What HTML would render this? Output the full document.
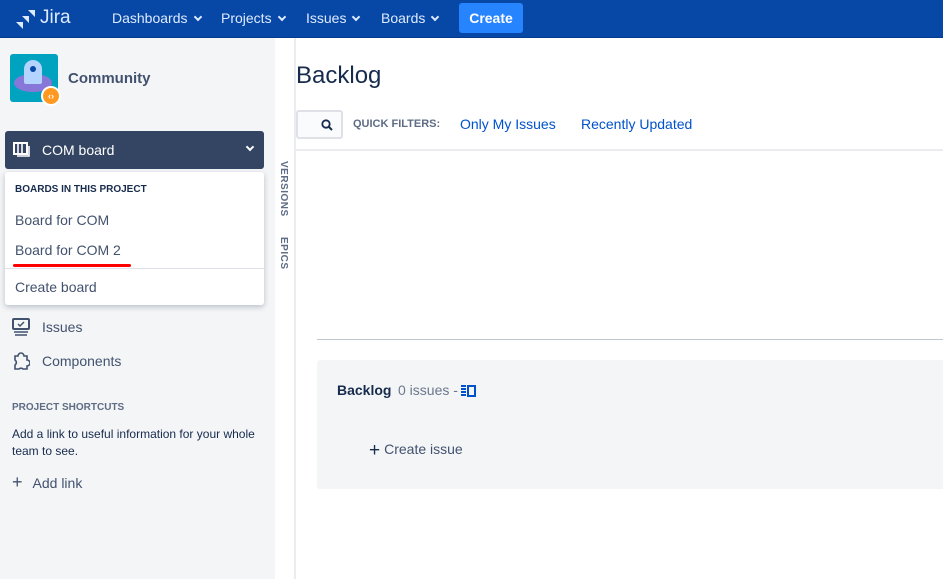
<!DOCTYPE html>
<html><head><meta charset="utf-8"><style>
*{box-sizing:border-box;margin:0;padding:0}
body{width:943px;height:579px;overflow:hidden;font-family:"Liberation Sans",Arial,sans-serif;background:#fff;position:relative;color:#172b4d}
.abs{position:absolute}
.nav{left:0;top:0;width:943px;height:38px;background:#0747a6;border-bottom:1px solid #053b8a}
.nav .it{position:absolute;top:10px;color:#deebff;font-size:14px}
.car{display:inline-block;width:6px;height:6px;border-right:2px solid #deebff;border-bottom:2px solid #deebff;transform:rotate(45deg);margin-left:7px;position:relative;top:-3px}
.side{left:0;top:38px;width:275px;height:541px;background:#f4f5f7}
.strip{left:275px;top:38px;width:21px;height:541px;background:#fff;border-right:2px solid #ebecf0}
.vt{writing-mode:vertical-rl;font-size:10px;font-weight:bold;color:#5e6c84;letter-spacing:.5px}
</style></head><body>
<div class="abs nav">
 <svg class="abs" style="left:16px;top:9px" width="20" height="20" viewBox="0 0 20 20"><path d="M12 1h7v7l-7-7zM6 7h7v7L6 7zM0 13h7v7L0 13z" fill="#deebff"/></svg>
 <div class="it" style="left:40px;top:7px;font-size:19px;color:#deebff">Jira</div>
 <div class="it" style="left:112px">Dashboards<span class="car"></span></div>
 <div class="it" style="left:221px">Projects<span class="car"></span></div>
 <div class="it" style="left:306px">Issues<span class="car"></span></div>
 <div class="it" style="left:381px">Boards<span class="car"></span></div>
 <div class="abs" style="left:459px;top:3px;width:64px;height:30px;background:#2684ff;border-radius:3px;color:#fff;font-weight:bold;font-size:14px;text-align:center;line-height:30px">Create</div>
</div>
<div class="abs side">
 <div class="abs" style="left:10px;top:16px;width:48px;height:48px;background:#00a3bf;border-radius:3px;overflow:hidden">
  <div class="abs" style="left:4px;top:20px;width:38px;height:18px;border-radius:50%;background:#8777d9"></div>
  <div class="abs" style="left:14px;top:6px;width:18px;height:24px;border-radius:9px 9px 2px 2px;background:#b3d4ff"></div>
  <div class="abs" style="left:20px;top:12px;width:6px;height:6px;border-radius:50%;background:#0747a6"></div>
 </div>
 <div class="abs" style="left:41px;top:48px;width:20px;height:20px;border-radius:50%;background:#ff991f;border:2px solid #fff;color:#fff;font-size:9px;font-weight:bold;text-align:center;line-height:16px">‹›</div>
 <div class="abs" style="left:68px;top:32px;font-size:15px;font-weight:bold;color:#42526e">Community</div>
 <div class="abs" style="left:5px;top:93px;width:259px;height:38px;background:#344563;border-radius:3px">
  <svg class="abs" style="left:8px;top:11px" width="18" height="16" viewBox="0 0 18 16"><rect x="1" y="1" width="13" height="11" fill="none" stroke="#fff" stroke-width="2"/><path d="M5 1v11M9 1v11M16 4v10H4" stroke="#fff" stroke-width="1.6" fill="none"/></svg>
  <div class="abs" style="left:37px;top:11px;color:#fff;font-size:14px">COM board</div>
  <div class="abs" style="left:242px;top:13px;width:6px;height:6px;border-right:2px solid #fff;border-bottom:2px solid #fff;transform:rotate(45deg)"></div>
 </div>
 <svg class="abs" style="left:12px;top:280px" width="18" height="18" viewBox="0 0 18 18"><rect x="1" y="1" width="16" height="10" rx="1" fill="none" stroke="#42526e" stroke-width="2"/><path d="M6 6l2 2 4-4" stroke="#42526e" stroke-width="1.5" fill="none"/><path d="M2 14h14M3 17h12" stroke="#42526e" stroke-width="1.5"/></svg>
 <div class="abs" style="left:42px;top:281px;font-size:14px;color:#42526e">Issues</div>
 <svg class="abs" style="left:12px;top:314px" width="18" height="18" viewBox="0 0 18 18"><path d="M3 4h3a3 3 0 0 1 6 0h3v4a3 3 0 0 1 0 6v3h-4a3 3 0 0 0-4 0H3v-4a3 3 0 0 0 0-5z" fill="none" stroke="#42526e" stroke-width="1.6"/></svg>
 <div class="abs" style="left:42px;top:315px;font-size:14px;color:#42526e">Components</div>
 <div class="abs" style="left:12px;top:364px;font-size:10px;font-weight:bold;color:#5e6c84">PROJECT SHORTCUTS</div>
 <div class="abs" style="left:12px;top:388px;width:255px;font-size:12px;line-height:17px;color:#172b4d">Add a link to useful information for your whole team to see.</div>
 <div class="abs" style="left:12px;top:434px;font-size:14px;color:#42526e"><span style="font-size:18px;margin-right:10px">+</span>Add link</div>
</div>
<div class="abs" style="left:5px;top:172px;width:259px;height:133px;background:#fff;border-radius:3px;box-shadow:0 2px 6px rgba(9,30,66,.25)">
 <div class="abs" style="left:10px;top:12px;font-size:10px;font-weight:bold;color:#172b4d">BOARDS IN THIS PROJECT</div>
 <div class="abs" style="left:10px;top:40px;font-size:14px;color:#42526e">Board for COM</div>
 <div class="abs" style="left:10px;top:70px;font-size:14px;color:#42526e">Board for COM 2</div>
 <div class="abs" style="left:8px;top:92px;width:118px;height:3px;background:#f00;border-radius:2px"></div>
 <div class="abs" style="left:0;top:96px;width:259px;height:1px;background:#dfe1e6"></div>
 <div class="abs" style="left:10px;top:107px;font-size:14px;color:#42526e">Create board</div>
</div>
<div class="abs strip">
 <div class="abs vt" style="left:3px;top:123px">VERSIONS</div>
 <div class="abs vt" style="left:3px;top:199px">EPICS</div>
</div>
<div class="abs" style="left:296px;top:62px;font-size:24px;color:#172b4d">Backlog</div>
<div class="abs" style="left:296px;top:110px;width:47px;height:29px;border:2px solid #dfe1e6;border-radius:3px;background:#fafbfc">
 <svg class="abs" style="left:23px;top:7px" width="12" height="12" viewBox="0 0 12 12"><circle cx="5" cy="5" r="3.7" fill="none" stroke="#172b4d" stroke-width="1.8"/><path d="M8 8l3 3" stroke="#172b4d" stroke-width="2"/></svg>
</div>
<div class="abs" style="left:353px;top:118px;font-size:11px;font-weight:bold;color:#5e6c84">QUICK FILTERS:</div>
<div class="abs" style="left:460px;top:116px;font-size:14px;color:#0052cc">Only My Issues</div>
<div class="abs" style="left:581px;top:116px;font-size:14px;color:#0052cc">Recently Updated</div>
<div class="abs" style="left:296px;top:149px;width:647px;height:2px;background:#ebecf0"></div>
<div class="abs" style="left:317px;top:339px;width:626px;height:1px;background:#c1c7d0"></div>
<div class="abs" style="left:317px;top:360px;width:626px;height:129px;background:#f4f5f7;border-radius:3px 0 0 3px">
 <div class="abs" style="left:20px;top:22px;font-size:14px;font-weight:bold;color:#172b4d">Backlog</div>
 <div class="abs" style="left:81px;top:22px;font-size:14px;color:#6b778c">0 issues -</div>
 <svg class="abs" style="left:144px;top:25px" width="16" height="12" viewBox="0 0 16 12"><path d="M0 1h5M0 4h5M0 7h5M0 10h5" stroke="#0052cc" stroke-width="2"/><rect x="7" y="1" width="7" height="10" fill="none" stroke="#0052cc" stroke-width="2"/></svg>
 <div class="abs" style="left:52px;top:80px;font-size:14px;color:#42526e"><span style="font-size:19px;color:#172b4d;margin-right:4px;vertical-align:-2px">+</span>Create issue</div>
</div>
</body></html>
